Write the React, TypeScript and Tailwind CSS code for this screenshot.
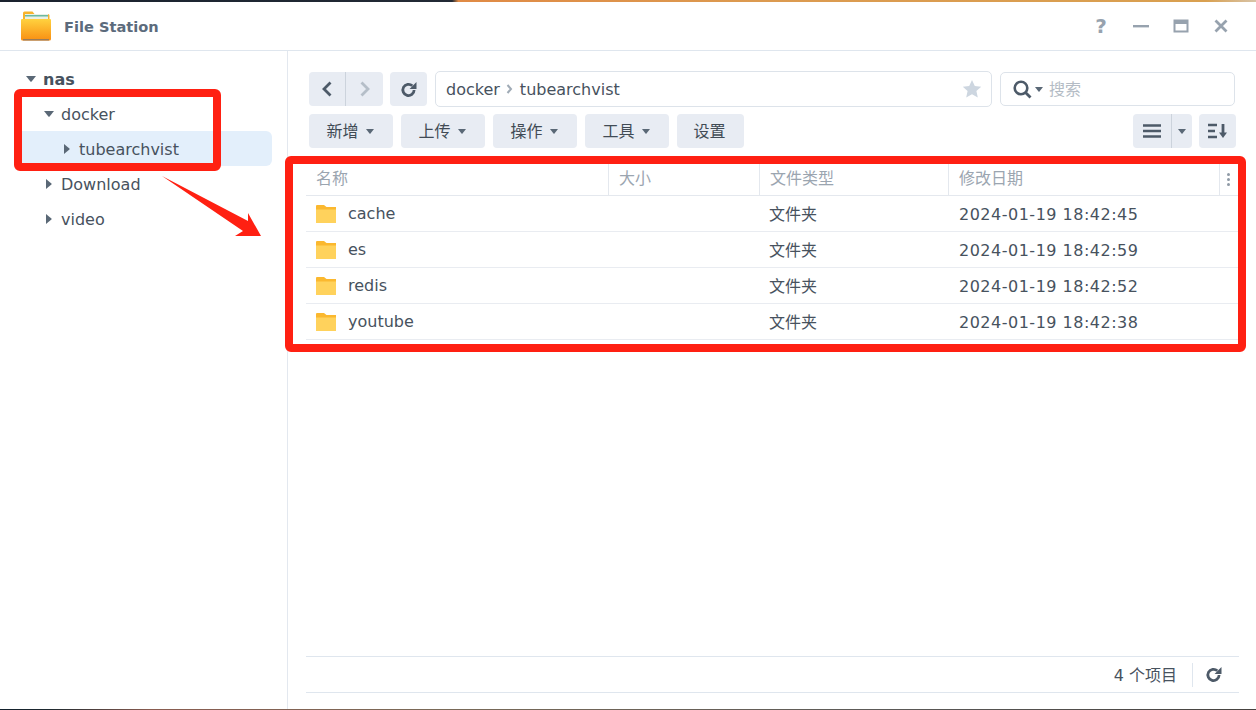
import React from "react";

function Caret({ dir, color = "#5a6876", size = 5 }: { dir: "down" | "right"; color?: string; size?: number }) {
  return dir === "down" ? (
    <svg width={size * 2} height={size + 1} viewBox="0 0 10 6" className="shrink-0"><path d="M0 0h10L5.600 5.400a.8.8 0 0 1-1.200 0z" fill={color} /></svg>
  ) : (
    <svg width={size + 1} height={size * 2} viewBox="0 0 6 10" className="shrink-0"><path d="M0 0v10L5.400 5.600a.8.8 0 0 0 0-1.200z" fill={color} /></svg>
  );
}

function Folder() {
  return (
    <svg width="20" height="18" viewBox="0 0 20 18" className="shrink-0">
      <path d="M0 1A1 1 0 0 1 1 0h7l2.500 2H20v4H0z" fill="#fbb82f" />
      <path d="M0 4.500h20V18H0z" fill="#ffd25c" />
    </svg>
  );
}

function Refresh({ size = 17, color = "#4d5a68" }: { size?: number; color?: string }) {
  return (
    <svg width={size} height={size} viewBox="0 0 16 16">
      <path d="M13.300 8.500a5.300 5.300 0 1 1-1.700-4" fill="none" stroke={color} strokeWidth="2.600" />
      <path d="M15.500 1V7.500H9z" fill={color} />
    </svg>
  );
}

function Btn({ label, caret = true, w }: { label: string; caret?: boolean; w: string }) {
  return (
    <div className={`h-[34px] ${w} rounded-[4px] bg-[#e8ecf3] flex items-center justify-center gap-[7px] pr-[2px] text-[16px] text-[#414b55]`}>
      <span className="pt-[2px]">{label}</span>
      {caret && <Caret dir="down" size={4} />}
    </div>
  );
}

function TreeRow({ label, indent, open, bold, selected }: { label: string; indent: string; open?: boolean; bold?: boolean; selected?: boolean }) {
  return (
    <div className={`h-[35px] flex items-center rounded-[6px] ${indent} ${selected ? "bg-[#e3effb]" : ""}`}>
      <div className="w-[11px] mr-[7px] flex items-center justify-center"><Caret dir={open ? "down" : "right"} /></div>
      <span className={`pt-[2px] text-[16px] text-[#47525e] ${bold ? "font-bold" : ""}`}>{label}</span>
    </div>
  );
}

const rows = [
  ["cache", "2024-01-19 18:42:45"],
  ["es", "2024-01-19 18:42:59"],
  ["redis", "2024-01-19 18:42:52"],
  ["youtube", "2024-01-19 18:42:38"],
];

export default function App() {
  return (
    <div className="w-[1256px] h-[710px] overflow-hidden relative flex flex-col font-['DejaVu_Sans','Noto_Sans_CJK_SC',sans-serif]">
      <div className="h-[2px] shrink-0 bg-[linear-gradient(90deg,#1a222e_0%,#222a35_36%,#e08a45_36.500%,#dc9a50_60%,#d9a050_96%,#d8c4a8_100%)]" />
      <div className="h-[707px] shrink-0 bg-white flex flex-col">
        <header className="h-[49px] shrink-0 border-b border-[#dfe6ee] flex items-center">
          <svg width="32" height="32" viewBox="0 0 32 32" className="ml-[20px]">
            <defs><linearGradient id="f" x1="0" y1="0" x2="0" y2="1"><stop offset="0" stopColor="#ffd23f" /><stop offset="1" stopColor="#f98f12" /></linearGradient></defs>
            <path d="M3 3A1.500 1.500 0 0 1 4.500 1.500h8l2 2.500H28A1.500 1.500 0 0 1 29.500 5.500V12H3z" fill="#f7b32c" />
            <rect x="5" y="4" width="23" height="6" fill="#e9f0e6" />
            <rect x="5" y="5" width="23" height="1.500" fill="#6cbaa0" />
            <path d="M2 9h28a1 1 0 0 1 1 1v19a1.500 1.500 0 0 1-1.500 1.500h-27A1.500 1.500 0 0 1 1 29V10a1 1 0 0 1 1-1z" fill="url(#f)" />
            <rect x="3" y="29" width="26" height="1.500" fill="#9a7b58" />
          </svg>
          <span className="ml-[12px] pt-[2px] text-[14.600px] font-bold text-[#5c6b7c]">File Station</span>
          <div className="ml-auto flex items-center gap-[20px] pr-[25px]">
            <span className="w-[20px] text-center text-[20px] font-bold leading-none text-[#97a2ae]">?</span>
            <svg width="20" height="20" viewBox="0 0 20 20"><rect x="2" y="9" width="16" height="2.400" fill="#97a2ae" /></svg>
            <svg width="20" height="20" viewBox="0 0 20 20"><path d="M3.500 4.500h13v11h-13z" fill="none" stroke="#97a2ae" strokeWidth="2" /><rect x="3" y="4" width="14" height="4" fill="#97a2ae" /></svg>
            <svg width="20" height="20" viewBox="0 0 20 20"><path d="M4.500 4.500l11 11M15.500 4.500l-11 11" stroke="#97a2ae" strokeWidth="2.800" /></svg>
          </div>
        </header>

        <div className="flex-1 flex min-h-0">
          <aside className="w-[288px] shrink-0 border-r border-[#e3e8ef] pt-[10px] pr-[15px]">
            <TreeRow label="nas" indent="pl-[25px]" open bold />
            <TreeRow label="docker" indent="pl-[43px]" open />
            <TreeRow label="tubearchvist" indent="ml-[16px] pl-[45px]" selected />
            <TreeRow label="Download" indent="pl-[43px]" />
            <TreeRow label="video" indent="pl-[43px]" />
          </aside>

          <main className="flex-1 min-w-0 pl-[18px] pr-[17px] flex flex-col">
            <div className="mx-[3px] mt-[20px] flex h-[36px] items-center">
              <div className="h-[34px] w-[74px] rounded-[4px] bg-[#e8ecf3] flex items-center">
                <div className="w-[37px] flex justify-center border-r border-[#ccd3dc] h-full items-center">
                  <svg width="12" height="16" viewBox="0 0 12 16"><path d="M9.500 1.500L3 8l6.500 6.500" fill="none" stroke="#4d5a68" strokeWidth="2.800" /></svg>
                </div>
                <div className="flex-1 flex justify-center">
                  <svg width="12" height="16" viewBox="0 0 12 16"><path d="M2.500 1.500L9 8l-6.500 6.500" fill="none" stroke="#b5bec8" strokeWidth="2.800" /></svg>
                </div>
              </div>
              <div className="ml-[7px] h-[34px] w-[37px] rounded-[4px] bg-[#e8ecf3] flex items-center justify-center"><Refresh /></div>
              <div className="ml-[8px] h-[36px] w-[557px] rounded-[5px] border border-[#dde3ea] flex items-center pl-[10px] pr-[9px] text-[16px] text-[#47525e]">
                <span className="pt-[2px]">docker</span>
                <svg width="7" height="10" viewBox="0 0 7 10" className="mx-[6.500px]"><path d="M1.500 1L5 5 1.500 9" fill="none" stroke="#a0abb6" strokeWidth="2" /></svg>
                <span className="pt-[2px]">tubearchvist</span>
                <svg width="20" height="20" viewBox="0 0 20 20" className="ml-auto"><path d="M10 1l2.800 6 6.400.7-4.800 4.300 1.400 6.500L10 15.200 4.200 18.500 5.600 12 .8 7.700 7.200 7z" fill="#cdd6e0" /></svg>
              </div>
              <div className="ml-[8px] mr-px h-[34px] flex-1 rounded-[5px] border border-[#dde3ea] flex items-center pl-[12px]">
                <svg width="19" height="19" viewBox="0 0 19 19"><circle cx="8" cy="8" r="6.300" fill="none" stroke="#4d5a68" strokeWidth="2.600" /><path d="M12 12l5.500 5.500" stroke="#4d5a68" strokeWidth="2.800" /></svg>
                <span className="ml-[3px]"><Caret dir="down" size={4} /></span>
                <span className="ml-[6px] pt-[2px] text-[16px] text-[#b4bcc5]">搜索</span>
              </div>
            </div>

            <div className="mx-[3px] mt-[7px] flex items-center">
              <div className="flex gap-[8px]">
                <Btn label="新增" w="w-[84px]" />
                <Btn label="上传" w="w-[84px]" />
                <Btn label="操作" w="w-[84px]" />
                <Btn label="工具" w="w-[84px]" />
                <Btn label="设置" caret={false} w="w-[67px]" />
              </div>
              <div className="ml-auto flex gap-[7px]">
                <div className="h-[34px] w-[59px] rounded-[4px] bg-[#e8ecf3] flex items-center">
                  <div className="w-[39px] h-full border-r border-[#ccd3dc] flex items-center justify-center">
                    <svg width="18" height="14" viewBox="0 0 18 14"><path d="M0 1.500h18M0 7h18M0 12.500h18" stroke="#4d5a68" strokeWidth="2.400" /></svg>
                  </div>
                  <div className="flex-1 flex justify-center"><Caret dir="down" size={4} /></div>
                </div>
                <div className="h-[34px] w-[37px] rounded-[4px] bg-[#e8ecf3] flex items-center justify-center">
                  <svg width="20" height="16" viewBox="0 0 20 16"><path d="M0 2h9M0 8h7M0 14h9" stroke="#4d5a68" strokeWidth="2.400" /><path d="M15 1v10" stroke="#4d5a68" strokeWidth="2.800" /><path d="M11 9.500h8L15 15z" fill="#4d5a68" /></svg>
                </div>
              </div>
            </div>

            <div className="mt-[15px]">
              <div className="h-[33px] flex items-center border-b border-[#e4e8ee] text-[16px] text-[#9ba5b0]">
                <div className="w-[303px] h-full flex items-center pl-[10px] border-r border-[#e4e8ee]">名称</div>
                <div className="w-[151px] h-full flex items-center pl-[10px] border-r border-[#e4e8ee]">大小</div>
                <div className="w-[189px] h-full flex items-center pl-[10px] border-r border-[#e4e8ee]">文件类型</div>
                <div className="w-[271px] h-full flex items-center pl-[10px] border-r border-[#e4e8ee]">修改日期</div>
                <div className="flex-1 flex flex-col items-center gap-[2px] pr-[3px]">
                  <i className="w-[3px] h-[3px] rounded-full bg-[#8f9aa6]" />
                  <i className="w-[3px] h-[3px] rounded-full bg-[#8f9aa6]" />
                  <i className="w-[3px] h-[3px] rounded-full bg-[#8f9aa6]" />
                </div>
              </div>
              {rows.map(([n, d]) => (
                <div key={n} className="h-[36px] flex items-center border-b border-[#e9ecf1] text-[16px] text-[#47525e]">
                  <div className="w-[303px] flex items-center pl-[10px] gap-[12px]"><Folder /><span>{n}</span></div>
                  <div className="w-[151px]" />
                  <div className="w-[189px] pl-[9px] pt-[2px]">文件夹</div>
                  <div className="pl-[10px] pt-[2px] tracking-[0.500px]">{d}</div>
                </div>
              ))}
            </div>

            <div className="mt-auto mb-[16px] h-[37px] border-y border-[#dfe6ee] flex items-center justify-end">
              <span className="pt-[2px] text-[16px] text-[#47525e]">4 个项目</span>
              <div className="ml-[15px] h-[24px] border-l border-[#dfe6ee] pl-[12px] pr-[17px] flex items-center"><Refresh /></div>
            </div>
          </main>
        </div>
      </div>
      <div className="h-px shrink-0 bg-[linear-gradient(90deg,#12202c_0%,#1f2a30_4%,#8a5c50_12%,#7a6a58_35%,#5c5a58_70%,#46423f_100%)]" />

      {/* red annotations drawn on top of the screenshot */}
      <div className="absolute left-[14px] top-[89px] w-[207px] h-[82px] border-[8px] border-[#ff2012] rounded-[6px]" />
      <div className="absolute left-[285px] top-[156px] w-[961px] h-[196px] border-[8px] border-[#ff2012] rounded-[6px]" />
      <svg className="absolute left-[160px] top-[174px]" width="104" height="66" viewBox="0 0 104 66">
        <path d="M2 2L88 47 88 39 101 62 75 62 83 57z" fill="#ff2012" />
      </svg>
    </div>
  );
}
